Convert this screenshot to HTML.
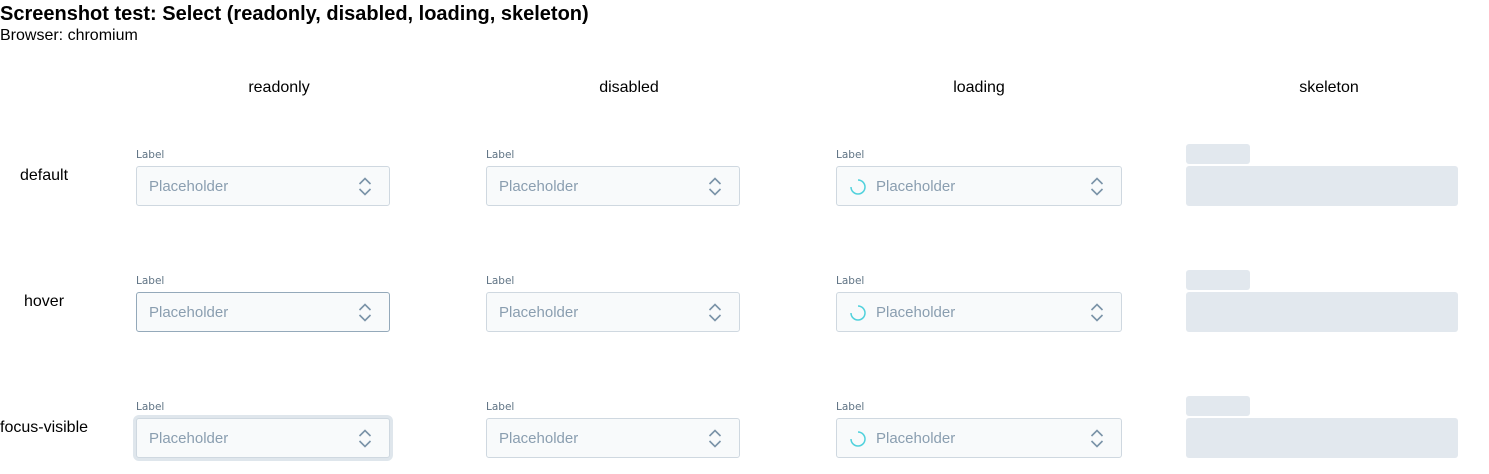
<!DOCTYPE html>
<html><head><meta charset="utf-8"><style>
*{box-sizing:border-box}
body{margin:0;width:1489px;height:474px;background:#fff;font-family:"Liberation Sans",sans-serif;color:#000;position:relative;overflow:hidden}
.a{position:absolute}
h1{position:absolute;left:0;top:2px;margin:0;font-size:20px;font-weight:bold;line-height:24px}
.sub{left:0;top:27px;font-size:16px;line-height:18px}
.ch{font-size:16px;top:79px;line-height:18px;text-align:center;width:200px}
.rl{font-size:16px;line-height:18px}
.lab{position:absolute;font-family:"DejaVu Sans",sans-serif;font-size:10.5px;color:#5f7384;line-height:12px}
.f{position:absolute;height:40px;border:1px solid #cfd8e0;border-radius:3px;background:#f8fafb}
.f.h{border-color:#94a9ba}
.f.fv{box-shadow:0 0 0 3px #dfe6ec}
.ph{position:absolute;top:11px;font-size:15px;color:#8a9eb0;line-height:18px}
.chev{position:absolute;top:10px;width:14px;height:20px}
.sk{position:absolute;background:#e2e8ee;border-radius:3px}
</style></head><body>
<h1>Screenshot test: Select (readonly, disabled, loading, skeleton)</h1>
<div class="a sub">Browser: chromium</div>
<div class="a ch" style="left:179px">readonly</div>
<div class="a ch" style="left:529px">disabled</div>
<div class="a ch" style="left:879px">loading</div>
<div class="a ch" style="left:1229px">skeleton</div>
<div class="a rl" style="left:20px;top:167px">default</div>
<div class="a rl" style="left:24px;top:293px">hover</div>
<div class="a rl" style="left:0;top:419px">focus-visible</div>

<!-- Row 1 -->
<div class="lab" style="left:136px;top:149px">Label</div>
<div class="f" style="left:136px;top:166px;width:254px"><span class="ph" style="left:12px">Placeholder</span><svg class="chev" style="left:221px" viewBox="0 0 14 20"><path d="M1.5 7 L7 1.5 L12.5 7 M1.5 12 L7 17.5 L12.5 12" fill="none" stroke="#7a93a8" stroke-width="1.6"/></svg></div>
<div class="lab" style="left:486px;top:149px">Label</div>
<div class="f" style="left:486px;top:166px;width:254px"><span class="ph" style="left:12px">Placeholder</span><svg class="chev" style="left:221px" viewBox="0 0 14 20"><path d="M1.5 7 L7 1.5 L12.5 7 M1.5 12 L7 17.5 L12.5 12" fill="none" stroke="#7a93a8" stroke-width="1.6"/></svg></div>
<div class="lab" style="left:836px;top:149px">Label</div>
<div class="f" style="left:836px;top:166px;width:286px"><svg class="a" style="left:12px;top:11px" width="18" height="18" viewBox="0 0 18 18"><path d="M9 2 A7 7 0 1 1 2 9" fill="none" stroke="#4fd1dc" stroke-width="1.5"/></svg><span class="ph" style="left:39px">Placeholder</span><svg class="chev" style="left:253px" viewBox="0 0 14 20"><path d="M1.5 7 L7 1.5 L12.5 7 M1.5 12 L7 17.5 L12.5 12" fill="none" stroke="#7a93a8" stroke-width="1.6"/></svg></div>
<div class="sk" style="left:1186px;top:144px;width:64px;height:20px"></div>
<div class="sk" style="left:1186px;top:166px;width:272px;height:40px"></div>

<!-- Row 2 -->
<div class="lab" style="left:136px;top:275px">Label</div>
<div class="f h" style="left:136px;top:292px;width:254px"><span class="ph" style="left:12px">Placeholder</span><svg class="chev" style="left:221px" viewBox="0 0 14 20"><path d="M1.5 7 L7 1.5 L12.5 7 M1.5 12 L7 17.5 L12.5 12" fill="none" stroke="#7a93a8" stroke-width="1.6"/></svg></div>
<div class="lab" style="left:486px;top:275px">Label</div>
<div class="f" style="left:486px;top:292px;width:254px"><span class="ph" style="left:12px">Placeholder</span><svg class="chev" style="left:221px" viewBox="0 0 14 20"><path d="M1.5 7 L7 1.5 L12.5 7 M1.5 12 L7 17.5 L12.5 12" fill="none" stroke="#7a93a8" stroke-width="1.6"/></svg></div>
<div class="lab" style="left:836px;top:275px">Label</div>
<div class="f" style="left:836px;top:292px;width:286px"><svg class="a" style="left:12px;top:11px" width="18" height="18" viewBox="0 0 18 18"><path d="M9 2 A7 7 0 1 1 2 9" fill="none" stroke="#4fd1dc" stroke-width="1.5"/></svg><span class="ph" style="left:39px">Placeholder</span><svg class="chev" style="left:253px" viewBox="0 0 14 20"><path d="M1.5 7 L7 1.5 L12.5 7 M1.5 12 L7 17.5 L12.5 12" fill="none" stroke="#7a93a8" stroke-width="1.6"/></svg></div>
<div class="sk" style="left:1186px;top:270px;width:64px;height:20px"></div>
<div class="sk" style="left:1186px;top:292px;width:272px;height:40px"></div>

<!-- Row 3 -->
<div class="lab" style="left:136px;top:401px">Label</div>
<div class="f fv" style="left:136px;top:418px;width:254px"><span class="ph" style="left:12px">Placeholder</span><svg class="chev" style="left:221px" viewBox="0 0 14 20"><path d="M1.5 7 L7 1.5 L12.5 7 M1.5 12 L7 17.5 L12.5 12" fill="none" stroke="#7a93a8" stroke-width="1.6"/></svg></div>
<div class="lab" style="left:486px;top:401px">Label</div>
<div class="f" style="left:486px;top:418px;width:254px"><span class="ph" style="left:12px">Placeholder</span><svg class="chev" style="left:221px" viewBox="0 0 14 20"><path d="M1.5 7 L7 1.5 L12.5 7 M1.5 12 L7 17.5 L12.5 12" fill="none" stroke="#7a93a8" stroke-width="1.6"/></svg></div>
<div class="lab" style="left:836px;top:401px">Label</div>
<div class="f" style="left:836px;top:418px;width:286px"><svg class="a" style="left:12px;top:11px" width="18" height="18" viewBox="0 0 18 18"><path d="M9 2 A7 7 0 1 1 2 9" fill="none" stroke="#4fd1dc" stroke-width="1.5"/></svg><span class="ph" style="left:39px">Placeholder</span><svg class="chev" style="left:253px" viewBox="0 0 14 20"><path d="M1.5 7 L7 1.5 L12.5 7 M1.5 12 L7 17.5 L12.5 12" fill="none" stroke="#7a93a8" stroke-width="1.6"/></svg></div>
<div class="sk" style="left:1186px;top:396px;width:64px;height:20px"></div>
<div class="sk" style="left:1186px;top:418px;width:272px;height:40px"></div>
</body></html>
